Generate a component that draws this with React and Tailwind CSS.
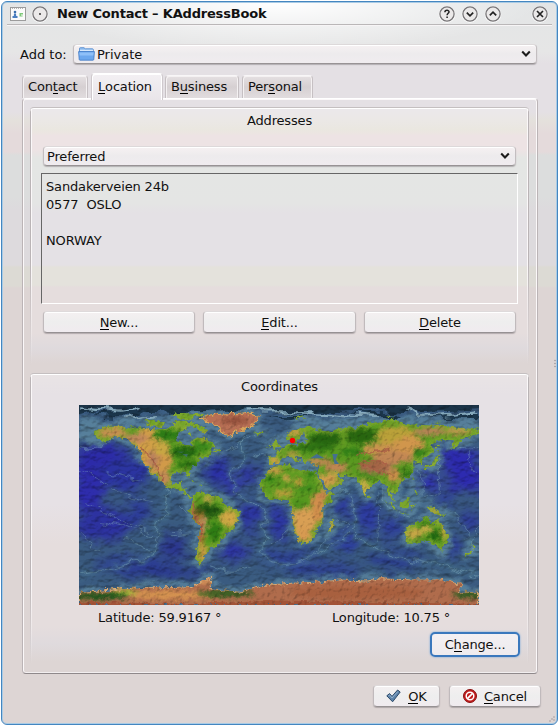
import React from "react";

const LAND = [
  // North America
  "M-168 66 L-162 59 L-157 57 L-163 54 L-153 58 L-147 61 L-138 59 L-131 54 L-124 48 L-124 40 L-118 33 L-113 27 L-109 23 L-105 20 L-97 15.5 L-90 13.5 L-85 10 L-81 7 L-77 8 L-83 10 L-83 15 L-88 16 L-87 21 L-91 19 L-96 19 L-97 26 L-92 30 L-84 30 L-81 25 L-80 30 L-76 36 L-70 42 L-63 45 L-61 50 L-56 53 L-61 57 L-68 60 L-74 62 L-78 58 L-79 52 L-86 55 L-94 59 L-90 65 L-82 69 L-95 71 L-110 68 L-125 70 L-141 70 L-157 71 Z",
  // Arctic islands
  "M-122 76 L-117 71 L-105 70 L-102 73 L-112 77 Z M-98 74 L-88 69 L-78 70 L-66 64 L-63 67 L-76 74 L-90 76 Z M-98 80 L-82 76 L-66 82 L-90 83 Z M-84 65 L-79 62 L-80 67 Z",
  // Cuba, Hispaniola and Newfoundland
  "M-84 23 L-75 20 L-78 22 Z M-73 20 L-68 18 L-71 18 Z M-59 50 L-53 47 L-55 51 Z",
  // South America
  "M-77 8 L-72 12 L-62 10 L-51 5 L-48 0 L-36 -5 L-35 -10 L-39 -16 L-41 -22 L-48 -27 L-53 -34 L-58 -38 L-65 -42 L-69 -52 L-71 -55 L-75 -49 L-73 -38 L-71 -20 L-78 -12 L-81 -5 L-79 3 Z",
  // Eurasia
  "M-9 37 L-9 43 L-2 43 L-4 48 L3 51 L8 55 L11 56 L11 54 L20 55 L24 59 L29 60 L22 61 L24 65 L19 62 L17 57 L13 56 L11 59 L6 58 L5 62 L13 67 L24 71 L40 67 L44 66 L55 69 L68 69 L75 72 L88 75 L104 77 L115 73 L130 72 L150 71 L170 69 L180 68 L180 65 L172 61 L163 59 L161 53 L156 51 L157 58 L150 59 L141 57 L136 54 L141 50 L134 43 L128 40 L128 35 L125 38 L121 40 L121 36 L121 30 L117 24 L109 21 L108 15 L105 9 L101 13 L104 2 L98 9 L97 17 L90 22 L85 19 L80 15 L79 9 L77 8 L73 18 L70 22 L66 25 L57 26 L50 30 L56 24 L59 22 L52 16 L44 13 L39 22 L34 29 L36 36 L28 37 L27 41 L23 37 L20 42 L13 45 L18 40 L16 38 L10 44 L3 43 L-2 37 Z",
  // Africa
  "M-6 35 L10 37 L12 33 L20 31 L32 31 L35 26 L39 16 L43 11 L51 12 L47 4 L40 -3 L40 -15 L35 -20 L33 -27 L26 -34 L19 -35 L15 -27 L12 -17 L13 -8 L9 1 L9 4 L-4 5 L-8 4 L-17 14 L-17 21 L-10 30 Z",
  // Madagascar, Britain, Ireland, Iceland and Svalbard
  "M44 -25 L49 -12 L50 -16 L47 -25 Z M-5 50 L1 52 L-3 59 L-6 57 Z M-10 52 L-6 54 L-8 55 Z M-24 65 L-14 66 L-18 63 Z M13 79 L25 80 L17 77 Z M52 71 L67 77 L57 73 Z M96 80 L104 79 L99 78 Z M138 75 L150 75 L143 74 Z",
  // Japan, Sakhalin and Taiwan
  "M130 32 L136 34 L141 36 L145 44 L141 44 L139 38 L131 34 Z M142 47 L144 54 L142 54 Z M120 23 L122 25 L121 22 Z",
  // Indonesia, the Philippines and New Guinea
  "M95 5 L106 -6 L104 -1 Z M106 -7 L120 -9 L114 -7 Z M109 1 L117 7 L118 1 L114 -4 Z M119 -5 L124 1 L120 0 Z M120 18 L126 7 L122 11 Z M131 -1 L141 -3 L150 -10 L142 -9 L136 -5 Z M80 9 L82 7 L80 6 Z",
  // Australia, Tasmania and New Zealand
  "M114 -22 L122 -17 L130 -12 L136 -12 L136 -16 L141 -17 L143 -11 L147 -19 L153 -26 L151 -34 L146 -39 L139 -36 L132 -32 L124 -34 L115 -34 Z M145 -41 L148 -41 L146 -43 Z M173 -35 L178 -38 L175 -41 Z M172 -41 L174 -42 L168 -47 L167 -45 Z",
];

const GREENLAND = "M-73 78 L-60 82 L-30 83.5 L-18 80 L-22 72 L-30 68 L-40 65 L-44 60 L-52 65 L-55 70 L-66 76 Z";
const ANTARCTICA =
  "M-180 -78 L-158 -77 L-142 -75 L-120 -74 L-100 -74 L-78 -73 L-67 -67 L-60 -64 L-62 -72 L-60 -76 L-35 -78 L-15 -72 L10 -70 L35 -69 L55 -67 L80 -68 L90 -66 L120 -67 L145 -67 L165 -71 L163 -78 L180 -78 L180 -90 L-180 -90 Z";

// Elevation tints: [fill, lon, lat, rx, ry]
const TINTS = [
  ["#d9a04a", -118, 52, 12, 18], ["#d99a4c", -108, 40, 12, 12], ["#cf8f55", -150, 65, 14, 4],
  ["#c98660", -128, 60, 11, 4], ["#c08060", -113, 41, 5, 9], ["#c98a5a", -103, 24, 5, 7],
  ["#cfa846", -106, 52, 7, 8], ["#1f6410", -85, 48, 12, 5], ["#2a7012", -82, 36, 10, 4],
  ["#2a7a16", -100, 63, 14, 5], ["#3a8a1c", -68, 53, 8, 5], ["#c89a3c", -66, 62, 5, 3],
  ["#1d5210", -64, -5, 12, 6], ["#2c7a14", -58, -24, 6, 9], ["#d9a848", -45, -12, 8, 8],
  ["#b9702f", -70, -20, 3, 16], ["#c28a62", -68, -18, 3, 9], ["#d89a48", -69, -43, 3, 9],
  ["#b5603d", -76, -7, 2, 8], ["#cfa850", -64, 5, 4, 3],
  ["#d99d4c", 14, 65, 7, 2.5], ["#22600f", 45, 60, 19, 5], ["#26640f", 74, 62, 14, 7],
  ["#2c7014", 30, 52, 20, 4], ["#6a9c24", 58, 60, 3, 8], ["#d99a4c", -4, 40, 4, 3], ["#cf8f50", 12, 46, 6, 1.5],
  ["#c98458", 36, 39, 11, 3], ["#c98458", 52, 34, 11, 4], ["#d99d50", 45, 23, 8, 6],
  ["#c0a23c", 105, 62, 18, 9], ["#cf9450", 95, 50, 20, 6], ["#b8755a", 88, 34, 16, 6],
  ["#a86048", 86, 35, 13, 4], ["#c88558", 103, 43, 18, 6], ["#d99650", 118, 54, 13, 8],
  ["#c88060", 135, 66, 15, 3], ["#cf9458", 160, 66, 12, 2.5], ["#cf8f4c", 103, 26, 6, 6],
  ["#d9b04c", 77, 17, 3, 8], ["#2c7014", 115, 28, 6, 4], ["#35801a", 126, 47, 5, 5],
  ["#2a7a16", 65, 48, 10, 3], ["#2f7a18", 78, 26, 9, 1.5],
  ["#cf9a48", -4, 31, 7, 3], ["#d9a850", 7, 24, 5, 3], ["#c8a040", 18, 20, 4, 4],
  ["#2c7a14", -8, 24, 6, 3], ["#2c7a14", 29, 28, 5, 3], ["#3f8a1c", 24, 15, 8, 3],
  ["#c8a040", 4, 11, 9, 3], ["#4a901c", 18, 0, 6, 5], ["#e0a058", 23, -15, 10, 13],
  ["#d98f50", 35, -2, 6, 14], ["#df9a55", 22, -27, 7, 6], ["#cf8450", 39, 9, 5, 4],
  ["#e0a058", 15, -9, 4, 5], ["#cfa24c", 47, -19, 2, 6],
  ["#cfa84a", 122, -26, 7, 5], ["#d9b04c", 133, -22, 6, 3], ["#1c6410", 140, -27, 5, 5],
  ["#2c7a14", 132, -16, 8, 2], ["#d9a848", 148, -24, 2, 8], ["#2c7a14", 128, -31, 8, 1.5],
  ["#c89a4a", 141, -5, 6, 1.5],
];

const DEEPS = [
  ["#2c2aa8", -160, 42, 25, 13], ["#2e2cac", -172, 14, 16, 20], ["#2b34a0", -138, 28, 22, 15],
  ["#2d32a0", -158, -18, 25, 15], ["#2d3d98", -128, -6, 14, 12], ["#2b3b96", -130, -54, 38, 6],
  ["#2b3690", -95, -37, 14, 10], ["#2a2fa6", -56, 31, 13, 11], ["#3032ae", -43, 17, 9, 8],
  ["#2e36a0", -27, 28, 9, 10], ["#2c34a2", -26, -10, 10, 15], ["#2c2eac", -40, -42, 15, 7],
  ["#2c34a4", 0, -16, 9, 16], ["#2b3c9a", 8, -48, 24, 6], ["#2c38a0", 60, -2, 9, 9],
  ["#2c38a6", 80, -12, 8, 15], ["#2c3aa0", 102, -20, 8, 12], ["#2c3ca0", 60, -33, 10, 10],
  ["#2a3c90", 105, -49, 26, 8], ["#2d2ab0", 160, 41, 18, 10], ["#2d2ab0", 169, 23, 18, 12],
  ["#2f2eb4", 135, 20, 10, 9], ["#2c3aa0", 150, 5, 10, 5], ["#2c36a0", 172, -12, 8, 8],
  ["#2c38a0", 158, -38, 6, 9], ["#2a3890", -100, -60, 42, 5], ["#2c3c98", 40, -58, 34, 5],
];

const RIDGES = [
  "M-30 62 C-38 48 -26 42 -34 34 C-48 22 -46 14 -32 6 C-12 0 -10 -18 -14 -32 C-18 -44 -14 -52 0 -54 C24 -52 36 -46 56 -30 C70 -22 70 -8 64 6 C58 14 50 13 44 12",
  "M66 -24 C80 -38 100 -46 124 -50 C146 -54 164 -62 180 -64",
  "M-180 -62 C-148 -56 -122 -54 -112 -38 C-106 -20 -104 0 -102 14",
  "M90 12 L89 -32 M94 14 C96 2 104 -10 118 -11",
  "M-180 52 C-168 49 -158 51 -146 58",
  "M144 42 C142 28 146 20 145 12 C140 6 134 6 130 4 M126 30 C130 22 127 12 128 6",
  "M180 -16 C174 -26 178 -34 172 -42 M154 -8 C164 -12 170 -20 168 -30",
  "M157 50 C166 54 174 52 180 51 M170 50 C168 42 172 34 176 28",
  "M-165 -6 L-118 -22 M-160 -14 L-115 -26 M-150 12 L-112 3 M-154 30 L-122 22 M-140 -32 L-112 -40",
  "M-90 -2 L-82 -10 M-96 -26 L-78 -24 M-62 -54 C-50 -60 -34 -60 -24 -56",
  "M-48 48 C-36 52 -28 58 -20 62 M-22 46 L-12 42 M-50 60 C-44 66 -36 70 -22 76",
  "M10 -22 L-10 -36 M44 -28 C40 -36 34 -42 28 -46 M52 -12 C58 -16 60 -20 56 -24",
  "M-178 30 C-168 24 -160 20 -154 18 M-176 4 L-162 -4 M-178 -24 C-170 -30 -174 -38 -160 -42",
];

function Ellipses({ items }) {
  return items.map(([fill, lon, lat, rx, ry], i) => (
    <ellipse key={i} cx={lon} cy={lat} rx={rx} ry={ry} fill={fill} />
  ));
}

function WorldMap() {
  const degrees = "translate(200 100) scale(1.1111 -1.1111)";
  return (
    <svg viewBox="0 0 400 200" width="400" height="200" className="block">
      <defs>
        <filter id="seaRelief" x="0" y="0" width="400" height="200" filterUnits="userSpaceOnUse" colorInterpolationFilters="sRGB">
          <feTurbulence type="fractalNoise" baseFrequency="0.05 0.07" numOctaves="3" seed="8" result="warp" />
          <feTurbulence type="fractalNoise" baseFrequency="0.13 0.17" numOctaves="4" seed="21" result="n" />
          <feDisplacementMap in="SourceGraphic" in2="warp" scale="16" xChannelSelector="R" yChannelSelector="G" result="d" />
          <feDiffuseLighting in="n" surfaceScale="0.95" diffuseConstant="1.25" lightingColor="#ffffff" result="l">
            <feDistantLight azimuth="250" elevation="50" />
          </feDiffuseLighting>
          <feComposite in="d" in2="l" operator="arithmetic" k1="0.95" k2="0.05" k3="0" k4="0" />
        </filter>
        <filter id="landRelief" x="0" y="0" width="400" height="200" filterUnits="userSpaceOnUse" colorInterpolationFilters="sRGB">
          <feTurbulence type="fractalNoise" baseFrequency="0.2" numOctaves="4" seed="3" result="n" />
          <feDisplacementMap in="SourceGraphic" in2="n" scale="7" xChannelSelector="R" yChannelSelector="G" result="d" />
          <feDiffuseLighting in="n" surfaceScale="0.8" diffuseConstant="1.28" lightingColor="#ffffff" result="l">
            <feDistantLight azimuth="225" elevation="52" />
          </feDiffuseLighting>
          <feComposite in="d" in2="l" operator="arithmetic" k1="0.95" k2="0.05" k3="0" k4="0" result="lit" />
          <feComposite in="lit" in2="d" operator="in" />
        </filter>
        <filter id="soft" x="-20%" y="-20%" width="140%" height="140%" colorInterpolationFilters="sRGB">
          <feGaussianBlur stdDeviation="2" />
        </filter>
        <filter id="softer" x="-20%" y="-20%" width="140%" height="140%" colorInterpolationFilters="sRGB">
          <feGaussianBlur stdDeviation="5" />
        </filter>
        <clipPath id="land">
          {LAND.map((d, i) => <path key={i} d={d} />)}
        </clipPath>
        <clipPath id="ice"><path d={ANTARCTICA} /></clipPath>
        <clipPath id="greenland"><path d={GREENLAND} /></clipPath>
      </defs>

      <g filter="url(#seaRelief)">
        <rect x="-20" y="-20" width="440" height="240" fill="#3a5b80" />
        <g transform={degrees}>
          <g filter="url(#softer)"><Ellipses items={DEEPS} /></g>
          <g filter="url(#soft)" fill="none" stroke="#57809b">
            {LAND.map((d, i) => <path key={i} d={d} strokeWidth="6" />)}
            <path d={GREENLAND} strokeWidth="7" />
            <path d={ANTARCTICA} strokeWidth="6" />
            <path d="M-180 72 L-130 74 M20 75 L180 74" strokeWidth="9" />
            <path d="M-180 66 L-166 58 M-8 57 L8 56 M105 8 L114 4" strokeWidth="11" />
          </g>
          <g fill="none" stroke="#4a7490" strokeOpacity="0.6" strokeWidth="5" filter="url(#soft)">
            {RIDGES.slice(0, 3).map((d) => <path key={d} d={d} />)}
          </g>
          <g fill="none" stroke="#86b0c0" strokeOpacity="0.45" strokeWidth="0.8">
            {RIDGES.map((d) => <path key={d} d={d} />)}
          </g>
          <path d="M-185 95 H185 V87 L120 84 L80 87 L20 84 L-40 87 L-100 84 L-150 86 L-185 80 Z" fill="#1b3448" />
          <path d="M-170 82 L-120 85 L-130 79 Z M60 84 L110 78 L104 84 Z M130 80 L180 78 V83 Z M-10 82 L10 78 L30 82 Z" fill="#1b364c" />
          <path d="M-178 87 L-140 84 L-125 87 M-110 80 L-140 77 M112 87 L128 80 L180 84 M20 84 L90 80 M-30 86 L30 86" fill="none" stroke="#86aabd" strokeWidth="2" />
        </g>
      </g>

      <g filter="url(#landRelief)">
        <g transform={degrees}>
          <g clipPath="url(#land)">
            <rect x="-180" y="-90" width="360" height="180" fill="#5a9a20" />
            <g filter="url(#soft)">
              <g fill="none" stroke="#a5b53c" strokeWidth="2">
                {LAND.map((d, i) => <path key={i} d={d} />)}
              </g>
              <g opacity="0.95"><Ellipses items={TINTS} /></g>
            </g>
            <path d="M-124 52 L-112 38 L-104 22 M-77 2 L-78 -8 L-70 -18 L-70 -34 M72 38 L92 29 L102 28 M74 40 L98 38 M70 46 L100 50" fill="none" stroke="#a95c45" strokeWidth="1.6" strokeOpacity="0.75" />
          </g>
          <g clipPath="url(#greenland)">
            <path d={GREENLAND} fill="#b87055" stroke="#d9a85c" strokeWidth="2.5" />
            <ellipse cx="-40" cy="76" rx="11" ry="3.5" fill="#94503c" filter="url(#soft)" />
          </g>
          <g clipPath="url(#ice)">
            <rect x="-180" y="-90" width="360" height="30" fill="#b06c4c" />
            <g filter="url(#soft)">
              <ellipse cx="-95" cy="-81" rx="44" ry="4" fill="#d59350" />
              <ellipse cx="-140" cy="-79" rx="12" ry="3" fill="#aabb3c" />
              <ellipse cx="-160" cy="-82" rx="25" ry="3.2" fill="#19551a" />
              <ellipse cx="-48" cy="-80" rx="27" ry="2.4" fill="#1a5c18" />
              <ellipse cx="172" cy="-81" rx="17" ry="2.6" fill="#1f5a1c" />
              <ellipse cx="70" cy="-79" rx="60" ry="6" fill="#a8603f" />
              <ellipse cx="-68" cy="-69" rx="8" ry="3" fill="#cf8f58" />
            </g>
            <path d={ANTARCTICA} fill="none" stroke="#d8ad78" strokeWidth="1.6" />
            <path d="M-180 -87 L-80 -89 L0 -86 L180 -89 V-90 H-180 Z" fill="#a25337" />
          </g>
        </g>
      </g>

      {/* Inland seas */}
      <g transform={degrees} fill="#456f8e">
        <path d="M28 42 L34 46 L41 42 L35 42 Z M48 46 L53 46 L51 41 L54 37 L50 37 Z" />
        <path d="M-92 48 L-85 48 L-88 47 Z M-87 46 L-82 46 L-83 43 Z" opacity="0.6" />
      </g>
      <circle cx="213.5" cy="35.5" r="2.7" fill="#ff0000" />
    </svg>
  );
}

function Chevron({ className }) {
  return (
    <svg width="10" height="8" viewBox="0 0 10 8" className={className}>
      <path d="M1.2 1.6 L5 5.4 L8.8 1.6" fill="none" stroke="#1c1c1c" strokeWidth="2.1" />
    </svg>
  );
}

function Combo({ children, className = "" }) {
  return (
    <div className={"flex items-center rounded-[4px] border border-t-[#ddd9da] border-x-[#c3bec0] border-b-[#989395] bg-linear-to-b from-[#f6f1f2] via-[#edebed] to-[#f0ecef] shadow-[0_1px_1px_rgba(90,80,85,0.35),inset_0_1px_0_#fff] " + className}>
      {children}
      <Chevron className="ml-auto" />
    </div>
  );
}

function Button({ children, className = "" }) {
  return (
    <button className={"flex items-center justify-center rounded-[4px] border border-t-[#dedadb] border-x-[#c0babc] border-b-[#969193] bg-linear-to-b from-[#f4f0f1] via-[#eeeeee] to-[#f0ebef] tracking-[-0.15px] shadow-[0_1px_1px_rgba(90,80,85,0.35),inset_0_1px_0_#fff] " + className}>
      {children}
    </button>
  );
}

// Accelerator letter
function U({ children }) {
  return <span className="inline-block h-[15px] border-b border-black leading-[15px]">{children}</span>;
}

function Tab({ active, className = "", children }) {
  return (
    <div
      className={
        "rounded-t-[4px] border border-b-0 leading-[15px] " +
        (active
          ? "relative h-[27px] border-t-white border-x-[#cfc9cd] bg-linear-to-b from-[#f3f0f3] to-[#e9e5e9] pt-[5px] shadow-[inset_1px_1px_0_#fff,inset_-1px_0_0_#fff] "
          : "h-[23px] border-t-[#f8f6f7] border-x-[#c6c0c3] bg-linear-to-b from-[#e5e0e2] via-[#d6d0d2] to-[#e1dcde] pt-[3px] shadow-[inset_1px_1px_0_#f4f1f2,inset_-1px_0_0_#f4f1f2] ") +
        className
      }
    >
      {children}
    </div>
  );
}

function TitleButton({ children, className = "" }) {
  return (
    <svg width="18" height="18" viewBox="0 0 18 18" fill="none" className={className}>
      <circle cx="9" cy="9.4" r="7.3" fill="#e9e8e8" stroke="#ffffff" strokeWidth="2" />
      <circle cx="9" cy="9" r="7.1" fill="#ebe9e9" stroke="#777577" strokeWidth="1.3" />
      {children}
    </svg>
  );
}

export default function App() {
  return (
    <div className="h-[727px] w-[560px] overflow-hidden bg-white pt-px pl-px font-['DejaVu_Sans',sans-serif] text-[13px] leading-[15px] tracking-[-0.16px] text-[#111]">
      <div className="relative flex h-[724px] w-[557px] flex-col rounded-[6px] border border-[#4486c0] bg-[radial-gradient(ellipse_260px_48px_at_50%_0,#fff,rgba(255,255,255,0)),linear-gradient(to_bottom,#e3e5e6_0,#e6e6e6_50px,#e4e0e4_62px,#e4e0e4_110px,#e4e1dc_118px,#e4dadb_132px,#e4dadb_150px,#dcdddd_153px,#dcdddd_195px,#dddadd_208px,#dddadd_263px,#dcdad4_265px,#dcdad4_284px,#ddd5d4_286px,#ddd5d4_100%)] shadow-[inset_0_0_0_1px_#a9cbe5]">
        {/* Title bar */}
        <header className="mx-[5px] flex h-[23px] items-center border-b border-[#bab7b8] shadow-[0_1px_0_#f7f5f6]">
          <svg width="16" height="14" viewBox="0 0 16 14" className="ml-[3px] mt-[2px]">
            <rect x="0.5" y="0.5" width="15" height="13" fill="#fbfbfb" stroke="#9c9c9c" />
            <path d="M2 1.5 H14" stroke="#b5b5b5" strokeDasharray="1 1" />
            <circle cx="5" cy="5" r="1.3" fill="#3c6fae" />
            <path d="M4 6.5 H6 L6.2 9 H7.5 V11 H2.5 V9 H3.8 Z" fill="#4b7fc0" />
            <path d="M9.5 6 H13 V7.4 H11 V8.4 H12.6 V9.6 H9.5 Z" fill="#7fca7a" />
          </svg>
          <TitleButton className="ml-[5px] mt-px"><circle cx="9" cy="9" r="0.9" fill="#222" /></TitleButton>
          <span className="ml-[8px] mt-px whitespace-nowrap font-bold tracking-[-0.19px]">New Contact – KAddressBook</span>
          <TitleButton className="ml-auto mt-px">
            <path d="M6.9 7.2 C6.9 4.6 11.2 4.8 11 7 C10.9 8.3 9.1 8.4 9.1 10.2 M9.1 11.6 V13" stroke="#222" strokeWidth="1.5" />
          </TitleButton>
          <TitleButton className="ml-[5px] mt-px"><path d="M5.8 7.6 L9 10.8 L12.2 7.6" stroke="#222" strokeWidth="1.7" /></TitleButton>
          <TitleButton className="ml-[5px] mt-px"><path d="M5.8 10.4 L9 7.2 L12.2 10.4" stroke="#222" strokeWidth="1.7" /></TitleButton>
          <TitleButton className="ml-[29px] mr-[3px] mt-px"><path d="M6 6 L12 12 M12 6 L6 12" stroke="#222" strokeWidth="1.7" /></TitleButton>
        </header>

        <div className="mt-[19px] flex items-center pl-[18px]">
          <span className="w-[53px] tracking-normal">Add to:</span>
          <Combo className="h-[20px] w-[464px] pl-[4px] pr-[5px]">
            <svg width="17" height="14" viewBox="0 0 17 14" className="mr-[2px]">
              <path d="M1.5 5 V1.5 Q1.5 0.7 2.3 0.7 H6 L7.2 1.8 H14.5 Q15.3 1.8 15.3 2.6 V5 Z" fill="#8fbdf0" stroke="#4d86cc" strokeWidth="0.8" />
              <path d="M2 3.3 H15" stroke="#e8f3ff" />
              <path d="M0.6 4.6 H16.4 L15.8 12.4 Q15.7 13.2 15 13.2 H2 Q1.3 13.2 1.2 12.4 Z" fill="#6da8ee" stroke="#4079c4" strokeWidth="0.8" />
              <path d="M1.4 5.5 H15.6 L15.3 8.5 H1.7 Z" fill="#8fc0f8" />
            </svg>
            <span className="tracking-normal">Private</span>
          </Combo>
        </div>

        <nav className="mt-[9px] flex h-[25px] items-end pl-[20px]">
          <Tab className="w-[66px] pl-[5px]">Con<U>t</U>act</Tab>
          <Tab active className="-mb-[2px] ml-[3px] w-[72px] pl-[6px]"><U>L</U>ocation</Tab>
          <Tab className="ml-[2px] w-[74px] pl-[5px]">B<U>u</U>siness</Tab>
          <Tab className="ml-[3px] w-[71px] pl-[5px]">Per<U>s</U>onal</Tab>
        </nav>

        <main className="ml-[20px] flex h-[576px] w-[516px] flex-col rounded-[4px] border border-t-white border-x-[#bbb4b6] border-b-[#8f898b] px-[7px] pt-[8px] shadow-[inset_1px_0_0_#fbf8f9,inset_-1px_0_0_#fbf8f9,inset_0_-1px_0_#f2eeef,inset_0_1px_0_#fbf8f9]">
          {/* Addresses */}
          <section className="flex h-[258px] w-[499px] flex-col rounded-t-[4px] border-t border-[#c4bfc0] bg-[linear-gradient(to_bottom,#bab4b6_60%,rgba(186,180,182,0)),linear-gradient(to_bottom,#bab4b6_60%,rgba(186,180,182,0)),linear-gradient(to_bottom,#fbf8f9_60%,rgba(251,248,249,0)),linear-gradient(to_bottom,#fbf8f9_60%,rgba(251,248,249,0)),linear-gradient(to_bottom,#ebe8eb_0,#ebe8e6_12px,#eae7e0_22px,#ede3e4_28px,#ede3e4_42px,#e4e6e4_50px,#e4e5e4_95px,#e4e1e5_105px,#e4e1e5_157px,#e4e2dc_159px,#e4e2dc_177px,#e5dddd_179px,#e5dddd_225px,#dfdadd_240px,#ddd5d4_255px)] bg-[size:1px_100%,1px_100%,1px_100%,1px_100%,100%_100%] bg-[position:0_0,100%_0,1px_0,497px_0,0_0] bg-no-repeat px-[11px] pt-[5px] shadow-[inset_0_1px_0_#fff]">
            <h2 className="text-center">Addresses</h2>
            <Combo className="ml-[2px] mt-[18px] h-[20px] w-[473px] pl-[3px] pr-[5px]"><span>Preferred</span></Combo>
            <div className="mt-[7px] h-[131px] w-[477px] whitespace-pre border border-b-white border-l-[#666] border-r-white border-t-[#666] pl-[4px] pt-[4px] leading-[18px]">
              {"Sandakerveien 24b\n0577  OSLO\n\nNORWAY"}
            </div>
            <div className="mt-[7px] flex gap-[8px] pl-[2px]">
              <Button className="h-[22px] w-[152px]"><U>N</U>ew...</Button>
              <Button className="h-[22px] w-[153px]"><U>E</U>dit...</Button>
              <Button className="h-[22px] w-[152px]"><U>D</U>elete</Button>
            </div>
          </section>

          {/* Coordinates */}
          <section className="mt-[8px] flex h-[291px] w-[499px] flex-col rounded-t-[4px] border-t border-[#c4bfc0] bg-[linear-gradient(to_bottom,#bab4b6_70%,rgba(186,180,182,0)),linear-gradient(to_bottom,#bab4b6_70%,rgba(186,180,182,0)),linear-gradient(to_bottom,#fbf8f9_70%,rgba(251,248,249,0)),linear-gradient(to_bottom,#fbf8f9_70%,rgba(251,248,249,0)),linear-gradient(to_bottom,#e9e4e5_0,#e6e1e5_20px,#e6e1e5_130px,#e5dddd_170px,#e5dddd_252px,#dfdadd_270px,#ddd5d4_288px)] bg-[size:1px_100%,1px_100%,1px_100%,1px_100%,100%_100%] bg-[position:0_0,100%_0,1px_0,497px_0,0_0] bg-no-repeat shadow-[inset_0_1px_0_#fff]">
            <h2 className="mt-[5px] text-center tracking-[-0.08px]">Coordinates</h2>
            <div className="ml-[49px] mt-[11px]"><WorldMap /></div>
            <div className="mt-[5px] flex pl-[68px]">
              <span className="w-[234px]">Latitude: 59.9167 °</span>
              <span>Longitude: 10.75 °</span>
            </div>
            <button className="ml-[400px] mt-[7px] flex h-[25px] w-[90px] items-center justify-center rounded-[5px] border-2 border-[#3a78bd] bg-linear-to-b from-[#f3f0f3] to-[#eeebee] shadow-[0_0_2px_#5f9bd8]">
              <span>C<U>h</U>ange...</span>
            </button>
          </section>
        </main>

        <footer className="mt-[11px] flex justify-end gap-[9px] pr-[16px]">
          <Button className="h-[22px] w-[67px] gap-[7px]">
            <svg width="15" height="14" viewBox="0 0 15 14">
              <path d="M0.8 6.8 L3.6 4.6 L6 7.4 L11.6 1 L14.2 3 L6.6 12.8 Z" fill="#5d83aa" stroke="#2d4a69" />
              <path d="M2.4 6.8 L3.5 6 L6 9 L11.8 2.6" stroke="#91afcc" fill="none" />
            </svg>
            <span><U>O</U>K</span>
          </Button>
          <Button className="h-[22px] w-[92px] gap-[7px]">
            <svg width="14" height="14" viewBox="0 0 14 14">
              <circle cx="7" cy="7" r="6.5" fill="#c01c1c" stroke="#8a1010" />
              <circle cx="7" cy="7" r="3.8" fill="none" stroke="#fff" strokeWidth="1.5" />
              <path d="M4.4 9.6 L9.6 4.4" stroke="#fff" strokeWidth="1.7" />
            </svg>
            <span><U>C</U>ancel</span>
          </Button>
        </footer>

        {/* Resize grips */}
        <svg width="8" height="8" viewBox="0 0 8 8" className="absolute right-px bottom-px" fill="#9f999b">
          <circle cx="6" cy="2" r="0.8" /><circle cx="4" cy="4" r="0.8" /><circle cx="6" cy="5" r="0.8" /><circle cx="2" cy="6" r="0.8" />
        </svg>
        <svg width="2" height="9" viewBox="0 0 2 9" className="absolute top-[357px] right-px" fill="#9f999b">
          <circle cx="1" cy="1.5" r="0.8" /><circle cx="1" cy="4.5" r="0.8" /><circle cx="1" cy="7.5" r="0.8" />
        </svg>
      </div>
    </div>
  );
}
